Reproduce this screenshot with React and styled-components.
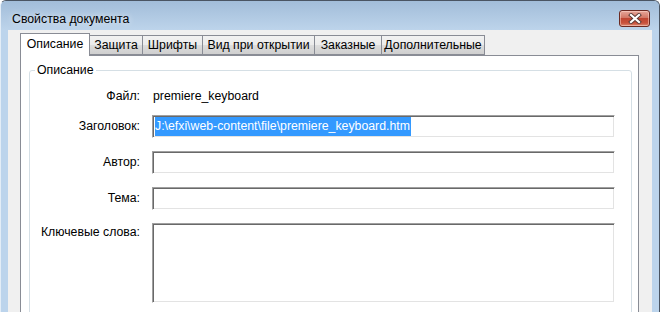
import React from "react";
import styled, { createGlobalStyle } from "styled-components";

const GlobalStyle = createGlobalStyle`
  html, body {
    margin: 0;
    padding: 0;
    background: #ffffff;
    overflow: hidden;
  }
  body {
    font-family: "Liberation Sans", Arial, sans-serif;
    font-size: 12.3px;
    color: #000;
  }
`;

const Window = styled.div`
  width: 660px;
  height: 312px;
  box-sizing: border-box;
  display: flex;
  flex-direction: column;
  background: #bcd4ec;
  border-top: 1px solid #4a5563;
  border-left: 1px solid #e3edf7;
  border-right: 1px solid #4a5563;
  border-radius: 6px 6px 0 0;
  overflow: hidden;
`;

const TitleBar = styled.div`
  height: 29px;
  flex-shrink: 0;
  box-sizing: border-box;
  display: flex;
  align-items: center;
  padding: 6px 9px 0 11px;
  background: linear-gradient(#a2bdd9, #bdd4eb);
`;

const Title = styled.div`
  flex: 1;
  font-size: 12.3px;
  text-shadow: 0 0 6px rgba(255, 255, 255, 0.8);
`;

const CloseButton = styled.div`
  width: 31px;
  height: 17px;
  box-sizing: border-box;
  border: 1px solid #6b2a22;
  border-radius: 3px;
  background: linear-gradient(#e6a79a, #d27765 45%, #bf4632 50%, #c9523c 80%, #dc8a74);
  box-shadow: inset 0 0 0 1px rgba(255, 220, 210, 0.5);
  display: flex;
  align-items: center;
  justify-content: center;
`;

const Body = styled.div`
  flex: 1;
  display: flex;
  padding: 0 7px 0 7px;
`;

const Client = styled.div`
  flex: 1;
  background: #f0f0f0;
  padding: 4px 13px 0 12px;
  display: flex;
  flex-direction: column;
`;

const TabStrip = styled.div`
  display: flex;
  align-items: flex-end;
  height: 22px;
  position: relative;
  z-index: 1;
  margin-bottom: -1px;
`;

const Tab = styled.div`
  width: ${(p) => p.$w}px;
  box-sizing: border-box;
  height: ${(p) => (p.$active ? 23 : 20)}px;
  margin: ${(p) => (p.$active ? "0" : "0 0 1px 0")};
  border: 1px solid #898c95;
  border-bottom: ${(p) => (p.$active ? "none" : "1px solid #898c95")};
  border-left: ${(p) => (p.$first || p.$active ? "1px solid #898c95" : "none")};
  background: ${(p) =>
    p.$active ? "#ffffff" : "linear-gradient(#f2f2f2, #ebebeb 50%, #dddddd 51%, #cfcfcf)"};
  display: flex;
  align-items: center;
  justify-content: center;
  padding-bottom: ${(p) => (p.$active ? 3 : 0)}px;
  white-space: nowrap;
`;

const Panel = styled.div`
  flex: 1;
  background: #ffffff;
  border: 1px solid #898c95;
  border-bottom: none;
  padding: 7px 6px 0 8px;
`;

const Group = styled.fieldset`
  margin: 0;
  padding: 7px 16px 0 0;
  border: 1px solid #d5dfe5;
  border-radius: 3px;
  height: 300px;
`;

const Legend = styled.legend`
  margin-left: 5px;
  padding: 0 2px;
  line-height: 15px;
`;

const Row = styled.div`
  display: grid;
  grid-template-columns: 110px 1fr;
  column-gap: 12px;
  margin-bottom: ${(p) => p.$mb}px;
`;

const Label = styled.div`
  text-align: right;
  align-self: ${(p) => (p.$top ? "start" : "center")};
  padding-top: ${(p) => (p.$top ? 2 : 0)}px;
  line-height: 15px;
`;

const Value = styled.div`
  height: 23px;
  line-height: 23px;
  padding-left: 1px;
`;

const Field = styled.div`
  height: ${(p) => p.$h}px;
  box-sizing: border-box;
  border: 1px solid;
  border-color: #a0a0a0 #ffffff #ffffff #a0a0a0;
  box-shadow: inset 1px 1px 0 #696969, inset -1px -1px 0 #e3e3e3;
  padding: 2px 2px 0 2px;
  background: #ffffff;
  overflow: hidden;
  white-space: nowrap;
`;

const Selected = styled.span`
  display: inline-block;
  background: #3399ff;
  color: #ffffff;
  line-height: 19px;
  padding: 0 1px 0 0;
  margin-top: -1px;
`;

const tabs = [
  { label: "Описание", w: 70 },
  { label: "Защита", w: 53 },
  { label: "Шрифты", w: 60 },
  { label: "Вид при открытии", w: 112 },
  { label: "Заказные", w: 67 },
  { label: "Дополнительные", w: 103 },
];

const CloseIcon = () => (
  <svg width="14" height="11" viewBox="0 0 14 11">
    <path d="M3 2 L11 9 M11 2 L3 9" stroke="#5a3a36" strokeWidth="4" strokeLinecap="square" />
    <path d="M3 2 L11 9 M11 2 L3 9" stroke="#ffffff" strokeWidth="2.2" strokeLinecap="square" />
  </svg>
);

export default function App() {
  return (
    <>
      <GlobalStyle />
      <Window>
        <TitleBar>
          <Title>Свойства документа</Title>
          <CloseButton>
            <CloseIcon />
          </CloseButton>
        </TitleBar>
        <Body>
          <Client>
            <TabStrip>
              {tabs.map((t, i) => (
                <Tab key={t.label} $w={t.w} $active={i === 0} $first={i === 0}>
                  {t.label}
                </Tab>
              ))}
            </TabStrip>
            <Panel>
              <Group>
                <Legend>Описание</Legend>
                <Row $mb={7}>
                  <Label>Файл:</Label>
                  <Value>premiere_keyboard</Value>
                </Row>
                <Row $mb={13}>
                  <Label>Заголовок:</Label>
                  <Field $h={23}>
                    <Selected>J:\efxi\web-content\file\premiere_keyboard.htm</Selected>
                  </Field>
                </Row>
                <Row $mb={13}>
                  <Label>Автор:</Label>
                  <Field $h={23} />
                </Row>
                <Row $mb={13}>
                  <Label>Тема:</Label>
                  <Field $h={23} />
                </Row>
                <Row $mb={0}>
                  <Label $top>Ключевые слова:</Label>
                  <Field $h={80} />
                </Row>
              </Group>
            </Panel>
          </Client>
        </Body>
      </Window>
    </>
  );
}
